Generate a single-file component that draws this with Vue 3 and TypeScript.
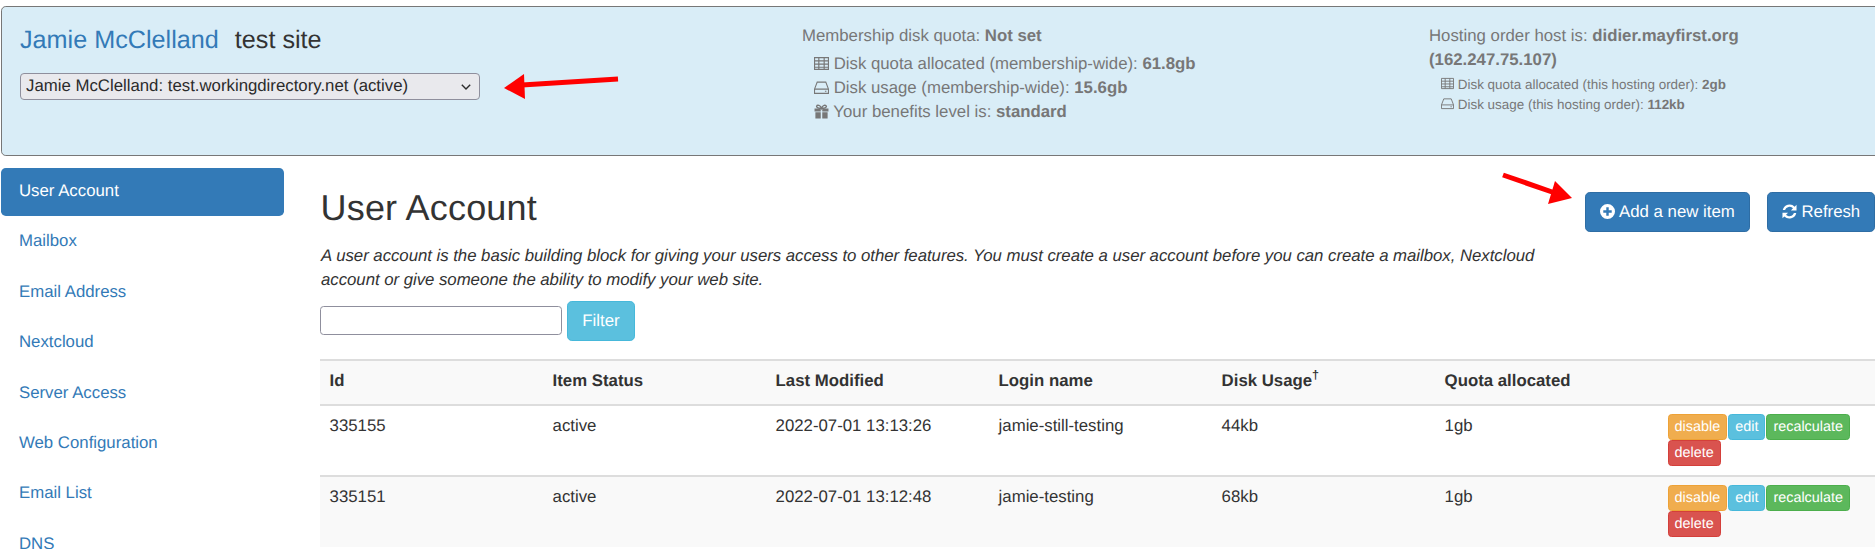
<script setup lang="ts">
const navItems = ['User Account', 'Mailbox', 'Email Address', 'Nextcloud', 'Server Access', 'Web Configuration', 'Email List', 'DNS']
const columns = ['Id', 'Item Status', 'Last Modified', 'Login name', 'Disk Usage', 'Quota allocated']
const rows = [
  { id: '335155', status: 'active', modified: '2022-07-01 13:13:26', login: 'jamie-still-testing', usage: '44kb', quota: '1gb' },
  { id: '335151', status: 'active', modified: '2022-07-01 13:12:48', login: 'jamie-testing', usage: '68kb', quota: '1gb' },
]
</script>

<template>
  <div class="page">
    <header class="well">
      <div class="well-col first">
        <div class="site-title"><a class="member">Jamie McClelland</a><span class="site">test site</span></div>
        <div class="select-wrap">
          <select class="order-select">
            <option>Jamie McClelland: test.workingdirectory.net (active)</option>
          </select>
          <svg class="chev" viewBox="0 0 10 6"><path d="M0.8 0.8L5 5L9.200 0.8" fill="none" stroke="#2b2b2b" stroke-width="1.400"/></svg>
        </div>
      </div>
      <div class="well-col second">
        <div class="line">Membership disk quota: <b>Not set</b></div>
        <div class="sub">
          <div class="line">
            <svg class="ic" viewBox="0 0 14 14"><path d="M0.500 1.500h13v11h-13z M0.500 4.500h13 M0.500 7.500h13 M0.500 10.500h13 M4.500 1.500v11 M9.500 1.500v11" fill="none" stroke="currentColor" stroke-width="1.100"/></svg>
            Disk quota allocated (membership-wide): <b>61.8gb</b>
          </div>
          <div class="line">
            <svg class="ic" viewBox="0 0 14 14"><path d="M3 2h8l2.500 6.500v4h-13v-4z M0.500 8.500h13 M10.200 10.500h1.400" fill="none" stroke="currentColor" stroke-width="1"/></svg>
            Disk usage (membership-wide): <b>15.6gb</b>
          </div>
          <div class="line">
            <svg class="ic" viewBox="0 0 14 14"><path d="M0.500 4.300h5.800v2.700h-5.800z M7.700 4.300h5.800v2.700h-5.800z M1.300 7.800h5v5.700h-5z M7.700 7.800h5v5.700h-5z" fill="currentColor"/><path d="M7 4c-1-3-4-3.500-4.500-2s2 2 4.500 2c2.500 0 5-.5 4.500-2s-3.500-1-4.500 2z" fill="none" stroke="currentColor" stroke-width="1.300"/></svg>
            Your benefits level is: <b>standard</b>
          </div>
        </div>
      </div>
      <div class="well-col third">
        <div class="line">Hosting order host is: <b>didier.mayfirst.org (162.247.75.107)</b></div>
        <div class="sub small">
          <div class="line">
            <svg class="ic" viewBox="0 0 14 14"><path d="M0.500 1.500h13v11h-13z M0.500 4.500h13 M0.500 7.500h13 M0.500 10.500h13 M4.500 1.500v11 M9.500 1.500v11" fill="none" stroke="currentColor" stroke-width="1"/></svg>
            Disk quota allocated (this hosting order): <b>2gb</b>
          </div>
          <div class="line">
            <svg class="ic" viewBox="0 0 14 14"><path d="M3 2h8l2.500 6.500v4h-13v-4z M0.500 8.500h13 M10.200 10.500h1.400" fill="none" stroke="currentColor" stroke-width="1"/></svg>
            Disk usage (this hosting order): <b>112kb</b>
          </div>
        </div>
      </div>
    </header>

    <div class="body">
      <nav class="side">
        <a v-for="(item, i) in navItems" :key="item" class="pill" :class="{ active: i === 0 }">{{ item }}</a>
      </nav>
      <main class="main">
        <div class="top">
          <div class="intro">
            <h2>User Account</h2>
            <p class="desc">A user account is the basic building block for giving your users access to other features. You must create a user account before you can create a mailbox, Nextcloud account or give someone the ability to modify your web site.</p>
            <div class="filter">
              <input class="filter-input" type="text" />
              <button class="btn info filter-btn">Filter</button>
            </div>
          </div>
          <div class="actions">
            <button class="btn primary add">
              <svg class="bi" viewBox="0 0 16 16"><path fill-rule="evenodd" d="M8 0a8 8 0 1 0 0 16A8 8 0 0 0 8 0z M6.700 3.500h2.600v3.200h3.200v2.600H9.300v3.200H6.700V9.300H3.500V6.700h3.200z" fill="currentColor"/></svg>
              Add a new item
            </button>
            <button class="btn primary refresh">
              <svg class="bi" viewBox="0 0 16 16"><path d="M15.500 0.800v6h-6l2.200-2.200A5 5 0 0 0 3.300 6.500H0.800A7.500 7.500 0 0 1 13.500 2.800z M0.500 15.200v-6h6L4.300 11.400a5 5 0 0 0 8.400-1.900h2.500A7.500 7.500 0 0 1 2.500 13.200z" fill="currentColor"/></svg>
              Refresh
            </button>
          </div>
        </div>
        <table class="grid">
          <thead>
            <tr>
              <th v-for="c in columns" :key="c">{{ c }}<sup v-if="c === 'Disk Usage'">†</sup></th>
              <th class="last"></th>
            </tr>
          </thead>
          <tbody>
            <tr v-for="r in rows" :key="r.id">
              <td>{{ r.id }}</td>
              <td>{{ r.status }}</td>
              <td>{{ r.modified }}</td>
              <td>{{ r.login }}</td>
              <td>{{ r.usage }}</td>
              <td>{{ r.quota }}</td>
              <td class="last">
                <div class="row-btns">
                  <button class="xs warning">disable</button>
                  <button class="xs info">edit</button>
                  <button class="xs success">recalculate</button>
                  <button class="xs danger">delete</button>
                </div>
              </td>
            </tr>
          </tbody>
        </table>
      </main>
    </div>

    <svg class="arrow" viewBox="0 0 1875 549" aria-hidden="true">
      <path d="M618 79 L522 85" stroke="#f00" stroke-width="5" fill="none"/>
      <path d="M504 88 L524 74 L525 99 Z" fill="#f00"/>
    </svg>
    <svg class="arrow" viewBox="0 0 1875 549" aria-hidden="true">
      <path d="M1503 175 L1555 193" stroke="#f00" stroke-width="5" fill="none"/>
      <path d="M1572 198 L1555 181 L1548 204 Z" fill="#f00"/>
    </svg>
  </div>
</template>

<style>
html, body { margin: 0; overflow: hidden; background: #fff; }
</style>

<style scoped>
.page {
  position: relative;
  width: 1875px;
  height: 549px;
  overflow: hidden;
  font-family: "Liberation Sans", Arial, sans-serif;
  font-size: 16.8px;
  line-height: 24px;
  color: #333;
  text-rendering: geometricPrecision;
}
.well {
  display: grid;
  grid-template-columns: 800px 627px 470px;
  box-sizing: border-box;
  width: 1898px;
  height: 150px;
  margin: 6px 0 0 1px;
  background: #d9edf7;
  border: 1px solid #777;
  border-radius: 4.8px;
}
.well-col { min-width: 0; }
.first { padding: 18px 0 0 18px; }
.second { padding: 17px 0 0 0; color: #777; }
.third { padding: 17px 40px 0 0; color: #777; }
.site-title { font-size: 25.2px; line-height: 30px; height: 35px; }
.member { color: #337ab7; }
.site { margin-left: 16px; color: #333; }
.select-wrap { position: relative; width: 460px; margin-top: 13px; }
.order-select {
  display: block;
  box-sizing: border-box;
  width: 460px;
  height: 27px;
  padding: 0 0 2px 5px;
  appearance: none;
  background: #e9e9ed;
  border: 1px solid #8f8f9d;
  border-radius: 4px;
  color: #2b2b2b;
  font-family: "Liberation Sans", Arial, sans-serif;
  font-size: 16.8px;
  text-rendering: geometricPrecision;
}
.chev { position: absolute; right: 9px; top: 11px; width: 10px; height: 6px; }
.sub { padding-left: 12px; margin-top: 4px; }
.sub.small { font-size: 13.44px; line-height: 20px; margin-top: 3px; }
.ic { width: 15px; height: 15px; vertical-align: -2px; }
.small .ic { width: 13px; height: 13px; vertical-align: -1px; }
.body { display: flex; margin-top: 12px; }
.side { display: flex; flex-direction: column; width: 283px; margin-left: 1px; flex: none; }
.pill {
  display: block;
  box-sizing: border-box;
  height: 48.4px;
  margin-bottom: 2px;
  padding: 11px 18px;
  color: #337ab7;
  border-radius: 4.8px;
}
.pill.active { background: #337ab7; color: #fff; }
.main { flex: 1; min-width: 0; margin-left: 36px; }
.top { display: flex; justify-content: space-between; }
.intro { width: 1240px; }
h2 { margin: 20px 0 0 0.5px; font-size: 36px; line-height: 40px; font-weight: 500; color: #333; letter-spacing: 0.2px; }
.desc { margin: 16px 0 0 1px; font-style: italic; letter-spacing: -0.03px; }
.filter { display: flex; align-items: center; gap: 5px; margin-top: 9px; }
.filter-input {
  box-sizing: border-box;
  width: 242px;
  height: 29px;
  margin-bottom: 2px;
  padding: 1px 2px;
  border: 1px solid #8f8f9d;
  border-radius: 3.600px;
  background: #fff;
  font-size: 16.8px;
  font-family: "Liberation Sans", Arial, sans-serif;
}
.actions { display: flex; gap: 17px; margin-top: 24px; align-items: flex-start; }
.btn {
  box-sizing: border-box;
  height: 40px;
  padding: 0;
  border-radius: 4.8px;
  border: 1px solid;
  font-family: "Liberation Sans", Arial, sans-serif;
  font-size: 16.8px;
  color: #fff;
  text-rendering: geometricPrecision;
}
.primary { background: #337ab7; border-color: #2e6da4; }
.btn.info { background: #5bc0de; border-color: #46b8da; }
.add { width: 165px; }
.refresh { width: 108px; }
.filter-btn { width: 68px; }
.bi { width: 15px; height: 15px; vertical-align: -2px; }
.grid {
  width: 1555px;
  margin-top: 18px;
  border-collapse: collapse;
  table-layout: fixed;
}
.grid th, .grid td {
  box-sizing: border-box;
  width: 223px;
  padding: 7.6px 9.6px;
  text-align: left;
  vertical-align: top;
  border-top: 2px solid #ddd;
}
.grid th { font-weight: 700; background: #f9f9f9; height: 45px; }
.grid th.last, .grid td.last { width: 217px; }
.grid tbody tr:nth-child(2) td { background: #f9f9f9; }
.grid tbody tr td { height: 71px; }
sup { font-size: 12.6px; line-height: 0; }
.row-btns { display: flex; flex-wrap: wrap; gap: 0 1px; }
.xs {
  box-sizing: border-box;
  height: 26px;
  padding: 0 6px;
  border: 1px solid;
  border-radius: 3.6px;
  font-family: "Liberation Sans", Arial, sans-serif;
  font-size: 14.4px;
  color: #fff;
  text-rendering: geometricPrecision;
}
.warning { background: #f0ad4e; border-color: #eea236; }
.xs.info { background: #5bc0de; border-color: #46b8da; }
.success { background: #5cb85c; border-color: #4cae4c; }
.danger { background: #d9534f; border-color: #d43f3a; }
.arrow { position: absolute; left: 0; top: 0; width: 1875px; height: 549px; pointer-events: none; }
</style>
